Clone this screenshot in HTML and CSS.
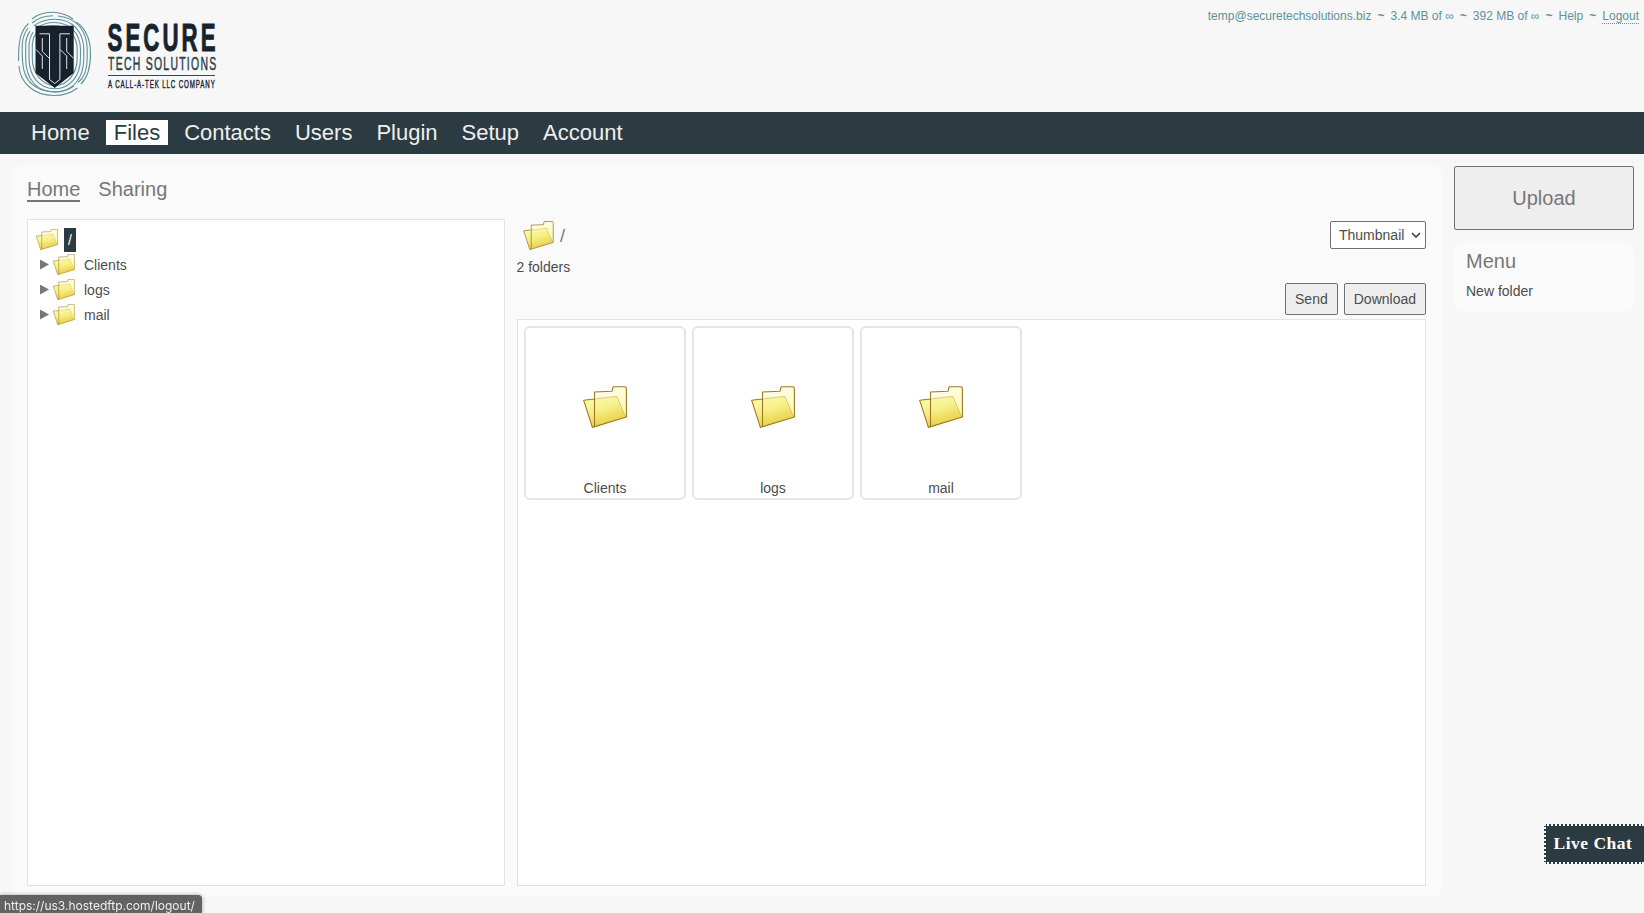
FILE: index.html
```html
<!DOCTYPE html>
<html lang="en">
<head>
<meta charset="utf-8">
<title>Files</title>
<link rel="stylesheet" href="styles.css">
</head>
<body>
<svg class="defs" width="0" height="0" aria-hidden="true">
  <defs>
    <linearGradient id="back" x1="0" y1="0" x2="0.3" y2="1"><stop offset="0" stop-color="#fffff0"/><stop offset="1" stop-color="#fbf7a8"/></linearGradient>
    <linearGradient id="front" x1="0.2" y1="0" x2="0.6" y2="1"><stop offset="0" stop-color="#fdfcae"/><stop offset="0.45" stop-color="#f7ee86"/><stop offset="1" stop-color="#e5c83a"/></linearGradient>
  </defs>
  <symbol id="folder" viewBox="0 0 44 42">
    <path d="M11.5 6 29 5.3 30.2 .7H42.3L43.4 2.2V31L11.5 41.2Z" fill="url(#back)"/>
    <path d="M.6 14.2 33.8 10.4 42.6 31 9.4 41.4Z" fill="url(#front)"/>
    <path d="M11.5 13 33.8 10.4 42.6 31" fill="none" stroke="#c9b45c" stroke-width=".7"/>
    <path class="folder-line" d="M11.5 13 .6 14.2 9.4 41.4 43.4 31V2.2L42.3.7H30.2L29 5.3 11.5 6V40.8" fill="none" stroke="#9c7a22" stroke-linejoin="round"/>
  </symbol>
</svg>
<header class="header">
  <svg class="logo" width="240" height="112" viewBox="0 0 240 112" role="img">
    <g fill="none" stroke="#5e929c" stroke-width="1.1">
      <path d="M32 19C39 13 50 11 59 13C64 14 69 16 73 19"/>
      <path d="M28.500 23.500C20.500 31 18.500 40 18.500 61"/>
      <path d="M19 66C20 82 33 95.500 54 95.500C63 95.500 71 93 77.500 88"/>
      <path d="M76 22C87 29 90.500 40 90.500 54C90.500 67 88 77 81 84"/>
      <path d="M32 23C38 18 45 15.800 53 15.800M58 16C78 18 87.200 32 87.200 50V58C87.200 70 84 78 78 82.500M74 86C58 97 32 92 25 74C22 66 22 52 22.300 44C22.800 37 25 32 28 28"/>
      <path d="M34 26C40 21 46 19.200 54 19.200C73 19 83.800 32 83.800 50V58C83.800 78 73 92 55 92C37 92 25.700 79 25.700 59V43C26 38 28 34 30 31"/>
      <path d="M37 28C42 24 48 22.500 54 22.500C70 22.500 80.500 33 80.500 50V58C80.500 76 70 88.700 55 88.700C39 88.700 29 76 29 58V44C29.500 39 31 35 33 32"/>
      <path d="M40 28C44 26 48 25.500 54 25.500C68 25.500 77.200 35 77.200 50V58C77.200 73 68 85.500 55 85.500C42 85.500 32.300 73 32.300 58V44C32.500 40 34 36 36 33"/>
    </g>
    <path d="M35.500 25.800H73.700V73L54.700 88L35.500 73Z" fill="#17212d"/>
    <g fill="none" stroke="#dfe6e8" stroke-width="1">
      <path d="M39.500 33.800H49.500V79.500L54.700 83.500L59.900 79.500V33.800H70"/>
      <path d="M42.300 38V51.500L49 58M36 49.500 42.300 56V69"/>
      <path d="M66.700 38V51.500L73.300 58M60.200 49.500 66.700 56V69"/>
    </g>
    <g class="wordmark">
      <text class="wordmark-main" transform="translate(107.500 51) scale(.57 1)">SECURE</text>
      <text class="wordmark-sub" transform="translate(108 70) scale(.58 1)">TECH SOLUTIONS</text>
      <text class="wordmark-note" transform="translate(108 88) scale(.62 1)">A CALL-A-TEK LLC COMPANY</text>
    </g>
    <path d="M108 75.500H215" stroke="#3a4650"/>
  </svg>
  <div class="account-info">
    <span>temp@securetechsolutions.biz</span><b>~</b><span>3.4 MB of <i>∞</i></span><b>~</b><span>392 MB of <i>∞</i></span><b>~</b><a>Help</a><b>~</b><a class="logout">Logout</a>
  </div>
</header>
<nav class="nav">
  <a>Home</a><a class="active">Files</a><a>Contacts</a><a>Users</a><a>Plugin</a><a>Setup</a><a>Account</a>
</nav>
<div class="page">
  <main class="panel">
    <div class="tabs"><a class="current">Home</a><a>Sharing</a></div>
    <div class="columns">
      <div class="tree">
        <div class="node root"><svg class="folder-s"><use href="#folder"/></svg><span class="selected">/</span></div>
        <div class="node"><i class="arrow"></i><svg class="folder-s"><use href="#folder"/></svg><span>Clients</span></div>
        <div class="node"><i class="arrow"></i><svg class="folder-s"><use href="#folder"/></svg><span>logs</span></div>
        <div class="node"><i class="arrow"></i><svg class="folder-s"><use href="#folder"/></svg><span>mail</span></div>
      </div>
      <section class="files">
        <div class="path-row">
          <div class="path"><svg class="folder-m"><use href="#folder"/></svg><span>/</span></div>
          <div class="view-select">Thumbnail<svg width="10" height="6" viewBox="0 0 10 6"><path d="M1 1 5 5 9 1" fill="none" stroke="#444" stroke-width="1.700"/></svg></div>
        </div>
        <div class="count">2 folders</div>
        <div class="actions"><button>Send</button><button>Download</button></div>
        <div class="grid">
          <div class="card"><svg class="folder-l"><use href="#folder"/></svg><span>Clients</span></div>
          <div class="card"><svg class="folder-l"><use href="#folder"/></svg><span>logs</span></div>
          <div class="card"><svg class="folder-l"><use href="#folder"/></svg><span>mail</span></div>
        </div>
      </section>
    </div>
  </main>
  <aside class="side">
    <button class="upload">Upload</button>
    <div class="menu"><h2>Menu</h2><a>New folder</a></div>
  </aside>
</div>
<div class="chat">Live Chat</div>
<div class="status">https://us3.hostedftp.com/logout/</div>
</body>
</html>
```
FILE: styles.css
```css
* { box-sizing: border-box; }
body {
  margin: 0;
  height: 913px;
  overflow: hidden;
  display: flex;
  flex-direction: column;
  background: #f7f7f7;
  color: #4c4c4c;
  font: 14px/16px "Liberation Sans", Arial, sans-serif;
}
.defs { position: absolute; }
svg { display: block; flex: none; }
.header { height: 112px; display: flex; justify-content: space-between; flex: none; }
.wordmark { font-family: "Liberation Sans", Arial, sans-serif; fill: #17242f; }
.wordmark-main { font-size: 39px; font-weight: bold; letter-spacing: 5.400px; stroke: #17242f; stroke-width: 1px; }
.wordmark-sub { font-size: 18px; letter-spacing: 2.200px; fill: #2b424d; stroke: #2b424d; stroke-width: .5px; }
.wordmark-note { font-size: 10px; letter-spacing: 1.400px; stroke: #17242f; stroke-width: .4px; }
.account-info {
  display: flex;
  height: 24px;
  padding: 9px 5px 0 0;
  color: #5e929c;
  font-size: 12px;
  line-height: 14px;
  white-space: nowrap;
}
.account-info b { width: 19.100px; text-align: center; }
.account-info i { font-style: normal; }
.logout { border-bottom: 1px dotted #5e929c; }

.nav {
  height: 42px;
  flex: none;
  display: flex;
  align-items: flex-start;
  gap: 8px;
  padding: 8px 0 0 23px;
  background: #2c3b41;
}
.nav a { padding: 0 8px; font-size: 22px; line-height: 25px; color: #eee; }
.nav .active { background: #fff; color: #2c3b41; }

.page { display: flex; gap: 12px; padding: 12px 10px 0 11px; flex: none; }
.panel {
  width: 1431px;
  height: 731px;
  padding: 13px 16px 11px;
  border-radius: 8px;
  background: #fafafa;
  display: flex;
  flex-direction: column;
}
.tabs { display: flex; gap: 18px; height: 40px; flex: none; align-items: flex-start; font-size: 20px; line-height: 21px; color: #777; }
.tabs .current { border-bottom: 2px solid #777; }
.columns { display: flex; gap: 12px; flex: 1; }
.tree { width: 478px; padding: 7px 9px; background: #fff; border: 1px solid #e3e3e3; }
.node { display: flex; align-items: center; height: 25px; gap: 9px; padding-left: 3px; }
.root { padding-left: 0; gap: 4px; }
.arrow { width: 9px; height: 10px; margin-right: -5px; background: #777; clip-path: polygon(0 0, 100% 50%, 0 100%); }
.folder-s { width: 22px; height: 21px; }
.root .folder-s { margin-left: -1px; margin-right: 2px; }
.folder-m { width: 31px; height: 29px; }
.folder-l { width: 44px; height: 42px; }
.folder-line { stroke-width: 1.1px; }
.folder-m .folder-line, .folder-s .folder-line { stroke-width: 1.6px; }
.selected { width: 12px; height: 24px; line-height: 24px; text-align: center; background: #2c3b41; color: #fff; }
.files { flex: 1; display: flex; flex-direction: column; }
.path-row { display: flex; justify-content: space-between; padding-top: 2px; height: 40px; }
.path { display: flex; gap: 6px; padding-left: 6px; height: 29px; align-items: center; font-size: 18px; color: #777; }
.view-select {
  width: 96px;
  height: 28px;
  display: flex;
  align-items: center;
  justify-content: space-between;
  padding: 0 4px 0 8px;
  background: #fff;
  border: 1px solid #707070;
  border-radius: 2px;
}
.count { height: 24px; margin-left: -.5px; }
.actions { display: flex; gap: 6px; height: 36px; justify-content: flex-end; align-items: flex-start; }
button {
  height: 32px;
  padding: 0 9px;
  border: 1px solid #707070;
  border-radius: 2px;
  background: #eee;
  color: #4c4c4c;
  font: inherit;
}
.grid { flex: 1; display: flex; align-items: flex-start; gap: 6px; padding: 6px; background: #fff; border: 1px solid #e3e3e3; }
.card {
  width: 162px;
  height: 174px;
  display: flex;
  flex-direction: column;
  justify-content: space-between;
  align-items: center;
  padding: 58px 0 2px;
  border: 2px solid #e5e5e5;
  border-radius: 6px;
}
.side { width: 180px; display: flex; flex-direction: column; gap: 12px; }
.upload { height: 64px; font-size: 20px; color: #777; }
.menu { height: 69px; padding: 8px 12px; border-radius: 8px; background: #fafafa; }
.menu h2 { margin: 0 0 11px; font-weight: normal; font-size: 20px; line-height: 22px; color: #777; }
.menu a { display: block; }
.chat {
  position: fixed;
  right: 0;
  top: 824px;
  width: 100px;
  height: 40px;
  padding-left: 7.500px;
  border: 2px dotted #fff;
  border-right: 0;
  background: #2c3b41;
  color: #fff;
  font: bold 17.500px/35px "Liberation Serif", serif;
  letter-spacing: .5px;
}
.status {
  position: fixed;
  left: 0;
  bottom: 0;
  width: 202px;
  height: 18px;
  padding-left: 4px;
  border-radius: 0 4px 0 0;
  background: #626262;
  box-shadow: 0 0 4px rgba(0, 0, 0, .35);
  color: #eee;
  font: 12px/21px Inter, sans-serif;
  white-space: nowrap;
}
```
